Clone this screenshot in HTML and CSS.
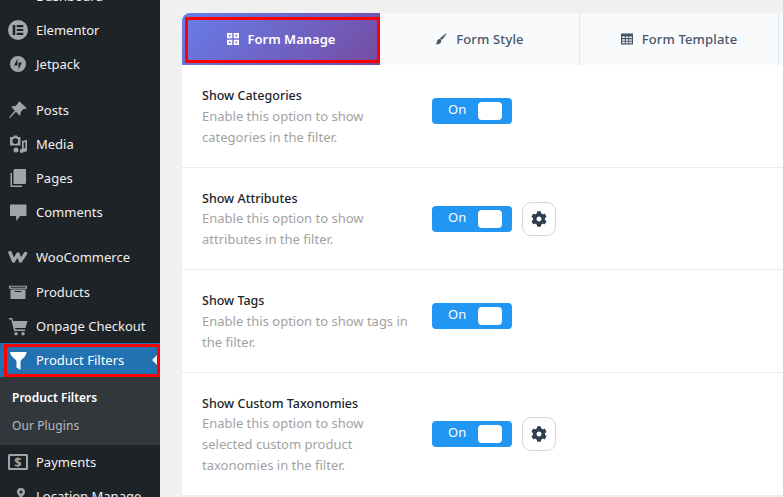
FILE: index.html
```html
<!DOCTYPE html>
<html lang="en">
<head>
<meta charset="utf-8">
<title>Product Filters</title>
<link rel="stylesheet" href="styles.css">
</head>
<body>
<div class="page">
  <aside class="sidebar">
    <nav class="menu">
      <a class="item"><svg class="ic" viewBox="0 0 20 20"><path d="M3 14a8 8 0 1 1 14 0z"/></svg><span>Dashboard</span></a>
      <a class="item"><svg class="ic ic-lg" viewBox="0 0 20 20"><path fill-rule="evenodd" d="M10 0a10 10 0 1 0 0 20 10 10 0 0 0 0-20zM4.700 5h2.600v10H4.700zM8.700 5h6.600v2.200H8.700zM8.700 8.900h6.600v2.200H8.700zM8.700 12.800h6.600V15H8.700z"/></svg><span>Elementor</span></a>
      <a class="item"><svg class="ic" viewBox="0 0 20 20"><path fill-rule="evenodd" d="M10 2a8 8 0 1 0 0 16 8 8 0 0 0 0-16zM9.500 4.500v7H6zM10.500 15.500v-7H14z"/></svg><span>Jetpack</span></a>
      <div class="sep"></div>
      <a class="item"><svg class="ic" viewBox="0 0 20 20"><path d="M11.500 1.500l7 6.500-1.300 1.200-1.400-.5-3.300 3.300c.4 1.500.1 2.700-.8 3.800L8 11.800 2 18l-.9-.7 5.700-6.600L3.300 7c1.200-1 2.500-1.300 3.900-.8l3.200-3.300-.3-.9z"/></svg><span>Posts</span></a>
      <a class="item"><svg class="ic" viewBox="0 0 20 20"><path fill-rule="evenodd" d="M2 3h3l1-1.500h3l1 1.500h2.500v8.500H2zM7.300 4.300a2.800 2.800 0 1 0 0 5.600 2.800 2.800 0 0 0 0-5.600z"/><path d="M14 7l5-1.200V16a2 2 0 1 1-1.700-1.900V8.200l-1.600.4V17a2 2 0 1 1-1.700-1.900zM8 13.500a2.500 2.500 0 1 1 0 5 2.500 2.500 0 0 1 0-5z"/></svg><span>Media</span></a>
      <a class="item"><svg class="ic" viewBox="0 0 20 20"><path d="M7 1h11v13.500a1.500 1.500 0 0 1-1.500 1.500H5.500V2.500A1.500 1.500 0 0 1 7 1z"/><path d="M2.500 5H4v12.500h10V19H2.500z"/></svg><span>Pages</span></a>
      <a class="item"><svg class="ic" viewBox="0 0 20 20"><path d="M3 2.500h14.500a1 1 0 0 1 1 1V13a1 1 0 0 1-1 1H12l-3.500 5-.5-5H3a1 1 0 0 1-1-1V3.500a1 1 0 0 1 1-1z"/></svg><span>Comments</span></a>
      <div class="sep sep-sm"></div>
      <a class="item item-woo"><svg class="ic ic-woo" viewBox="0 0 20 12"><path d="M2 1.500L5.500 10 10 3l2.500 7L17.500 2.500" /></svg><span>WooCommerce</span></a>
      <a class="item"><svg class="ic" viewBox="0 0 20 20"><path fill-rule="evenodd" d="M1 3.700h18v3H1zM2.300 4.700v1h15.400v-1zM2.500 7.500h15V17h-15zM6.500 9v1h7V9z"/></svg><span>Products</span></a>
      <a class="item"><svg class="ic" viewBox="0 0 20 20"><path d="M1 2h3.200l.8 3H19.500l-2 7H7l.5 1.500H17V15H6L3.200 3.500H1zM8 16a1.700 1.700 0 1 1 0 3.400A1.700 1.700 0 0 1 8 16zM15 16a1.700 1.700 0 1 1 0 3.400 1.700 1.700 0 0 1 0-3.400z"/></svg><span>Onpage Checkout</span></a>
      <a class="item item-current"><svg class="ic" viewBox="0 0 20 20"><path d="M2 2h16.500c0 2-1 4-3 6-2 1.500-3 2.500-3 4v8l-4-2.500V12c0-1.500-1-2.500-3-4C3.500 6 2 4 2 2z"/></svg><span>Product Filters</span><i class="pointer"></i></a>
      <div class="submenu">
        <a class="sub sub-on">Product Filters</a>
        <a class="sub">Our Plugins</a>
      </div>
      <a class="item"><svg class="ic ic-pay" viewBox="0 0 20 16"><path fill-rule="evenodd" d="M1.500 0h17A1.500 1.500 0 0 1 20 1.500v13a1.500 1.500 0 0 1-1.500 1.500h-17A1.500 1.500 0 0 1 0 14.500v-13A1.500 1.500 0 0 1 1.500 0zM2 2v12h16V2z"/><text x="10" y="12.500" class="dollar">$</text></svg><span>Payments</span></a>
      <a class="item"><svg class="ic" viewBox="0 0 20 20"><path fill-rule="evenodd" d="M13 2a4 4 0 0 1 4 4c0 2-2 4-4 6-2-2-4-4-4-6a4 4 0 0 1 4-4zM13 4.500a1.500 1.500 0 1 0 0 3 1.500 1.500 0 0 0 0-3z"/><path d="M1 16c3-4 6-5 8-5l4 3 3-3 3 1v8H1z"/></svg><span>Location Manage</span></a>
    </nav>
  </aside>
  <main class="main">
    <div class="panel">
      <div class="tabs">
        <div class="tab tab-on">
          <svg class="tab-ic" viewBox="0 0 12 12"><path fill-rule="evenodd" d="M0 0h5.300v5.300H0zM1.800 1.800v1.700h1.700V1.800zM6.700 0H12v5.300H6.700zM8.500 1.800v1.700h1.700V1.800zM0 6.700h5.300V12H0zM1.800 8.500v1.700h1.700V8.500zM6.700 6.700H12V12H6.700zM8.500 8.500v1.700h1.700V8.500z"/></svg>
          <span>Form Manage</span>
        </div>
        <div class="tab">
          <svg class="tab-ic" viewBox="0 0 12 12"><path d="M11.800.2c.3.300-3.500 5.300-5.200 6.800L5 5.400C6.500 3.700 11.500-.1 11.800.2zM4.400 6c1 0 1.900.8 1.900 1.900C6.300 10 4 11.500.3 11.300c1.300-.7 1.500-1.400 1.700-2.800C2.200 7 3.200 6 4.400 6z"/></svg>
          <span>Form Style</span>
        </div>
        <div class="tab">
          <svg class="tab-ic" viewBox="0 0 12 12"><path fill-rule="evenodd" d="M0 .5h12v11H0zM1.200 3.500v1.600h2.600V3.500zM4.800 3.500v1.600h2.400V3.500zM8.200 3.500v1.600h2.600V3.500zM1.200 6.200v1.600h2.600V6.200zM4.800 6.200v1.600h2.400V6.200zM8.200 6.200v1.600h2.600V6.200zM1.200 8.800v1.500h2.600V8.800zM4.800 8.800v1.500h2.400V8.800zM8.200 8.800v1.500h2.600V8.800z"/></svg>
          <span>Form Template</span>
        </div>
        <div class="tab tab-rest"></div>
      </div>
      <section class="row">
        <div class="info"><h3>Show Categories</h3><p>Enable this option to show categories in the filter.</p></div>
        <div class="controls controls-plain"><div class="toggle"><span>On</span><i></i></div></div>
      </section>
      <section class="row">
        <div class="info"><h3>Show Attributes</h3><p>Enable this option to show attributes in the filter.</p></div>
        <div class="controls"><div class="toggle"><span>On</span><i></i></div>
          <button class="gear"><svg viewBox="0 0 512 512"><path d="M487.400 315.700l-42.600-24.600c4.300-23.200 4.300-47 0-70.200l42.600-24.600c4.900-2.800 7.100-8.600 5.500-14-11.100-35.600-30-67.800-54.700-94.600-3.800-4.100-10-5.100-14.800-2.300L380.800 110c-17.900-15.400-38.500-27.300-60.800-35.100V25.800c0-5.600-3.900-10.500-9.400-11.700-36.700-8.200-74.300-7.800-109.200 0-5.500 1.200-9.400 6.100-9.400 11.700V75c-22.200 7.900-42.800 19.800-60.800 35.100L88.700 85.500c-4.900-2.800-11-1.900-14.800 2.300-24.700 26.700-43.600 58.900-54.700 94.600-1.700 5.400.6 11.200 5.500 14L67.300 221c-4.300 23.200-4.300 47 0 70.200l-42.600 24.600c-4.900 2.800-7.100 8.600-5.500 14 11.100 35.600 30 67.800 54.700 94.600 3.800 4.100 10 5.100 14.800 2.300l42.600-24.600c17.900 15.400 38.500 27.300 60.800 35.100v49.200c0 5.600 3.900 10.500 9.400 11.700 36.700 8.200 74.300 7.800 109.200 0 5.500-1.200 9.400-6.100 9.400-11.700v-49.200c22.200-7.900 42.800-19.800 60.800-35.100l42.600 24.600c4.900 2.800 11 1.900 14.800-2.300 24.700-26.700 43.600-58.900 54.700-94.600 1.500-5.500-.7-11.300-5.600-14.100zM256 336c-44.100 0-80-35.900-80-80s35.900-80 80-80 80 35.900 80 80-35.900 80-80 80z"/></svg></button></div>
      </section>
      <section class="row">
        <div class="info"><h3>Show Tags</h3><p>Enable this option to show tags in the filter.</p></div>
        <div class="controls controls-plain"><div class="toggle"><span>On</span><i></i></div></div>
      </section>
      <section class="row row-last">
        <div class="info"><h3>Show Custom Taxonomies</h3><p>Enable this option to show selected custom product taxonomies in the filter.</p></div>
        <div class="controls"><div class="toggle"><span>On</span><i></i></div>
          <button class="gear"><svg viewBox="0 0 512 512"><path d="M487.400 315.700l-42.600-24.600c4.300-23.200 4.300-47 0-70.200l42.600-24.600c4.900-2.800 7.100-8.600 5.500-14-11.100-35.600-30-67.800-54.700-94.600-3.800-4.100-10-5.100-14.800-2.300L380.800 110c-17.900-15.400-38.500-27.300-60.800-35.100V25.800c0-5.600-3.900-10.500-9.400-11.700-36.700-8.200-74.300-7.800-109.200 0-5.500 1.200-9.400 6.100-9.400 11.700V75c-22.200 7.900-42.800 19.800-60.800 35.100L88.700 85.500c-4.900-2.800-11-1.900-14.800 2.300-24.700 26.700-43.600 58.900-54.700 94.600-1.700 5.400.6 11.200 5.500 14L67.300 221c-4.300 23.200-4.300 47 0 70.200l-42.600 24.600c-4.900 2.800-7.100 8.600-5.500 14 11.100 35.600 30 67.800 54.700 94.600 3.800 4.100 10 5.100 14.800 2.300l42.600-24.600c17.900 15.400 38.500 27.300 60.800 35.100v49.200c0 5.600 3.900 10.500 9.400 11.700 36.700 8.200 74.300 7.800 109.200 0 5.500-1.200 9.400-6.100 9.400-11.700v-49.200c22.200-7.900 42.800-19.800 60.800-35.100l42.600 24.600c4.900 2.800 11 1.900 14.800-2.300 24.700-26.700 43.600-58.900 54.700-94.600 1.500-5.500-.7-11.300-5.600-14.100zM256 336c-44.100 0-80-35.900-80-80s35.900-80 80-80 80 35.900 80 80-35.900 80-80 80z"/></svg></button></div>
      </section>
    </div>
  </main>
</div>
</body>
</html>
```
FILE: styles.css
```css
* { box-sizing: border-box; }
html, body { margin: 0; height: 100%; overflow: hidden; }
body { background: #f0f0f1; font-family: "Noto Sans", "Open Sans", sans-serif; }
.page { display: flex; height: 497px; overflow: hidden; }

.sidebar { width: 160px; flex: none; background: #1d2327; height: 497px; overflow: hidden; }
.menu { margin-top: -21px; display: flex; flex-direction: column; }
.item { position: relative; display: flex; align-items: center; height: 34px; flex: none; color: #f0f0f1; font-size: 13px; }
.item .ic { width: 20px; height: 20px; margin-left: 8px; margin-right: 8px; fill: #a0a5aa; flex: none; }
.item .ic-lg { fill: #a7aaad; }
.item .ic-pay { height: 16px; }
.item .ic-woo { height: 12px; fill: none; stroke: #a0a5aa; stroke-width: 3.400; stroke-linejoin: round; stroke-linecap: round; }
.item-woo { height: 35px; padding-bottom: 1px; }
.dollar { font: 700 13px "Noto Sans", sans-serif; text-anchor: middle; fill: #a0a5aa; }
.sep { height: 12px; flex: none; }
.sep-sm { height: 11px; }
.item-current { background: #2271b1; color: #fff; }
.item-current .ic { fill: #fff; }
.item-current::after { content: ""; position: absolute; inset: 1px 0 0 4px; border: 3px solid #f00; z-index: 2; }
.pointer { position: absolute; right: 0; top: 9px; border: 8px solid transparent; border-right-color: #f0f0f1; border-left: 0; z-index: 1; }
.submenu { background: #32373c; height: 68px; padding-top: 6px; flex: none; }
.sub { display: flex; align-items: center; height: 28px; padding-left: 12px; font-size: 12px; color: rgba(240,246,252,.7); letter-spacing: 0.1px; }
.sub-on { color: #fff; font-weight: 600; letter-spacing: 0; }

.main { flex: 1; min-width: 0; padding: 13px 0 0 22px; overflow: hidden; }
.panel { background: #fff; width: 640px; }
.tabs { display: flex; height: 52px; background: #f8fafc; }
.tab { width: 199px; flex: none; display: flex; align-items: center; justify-content: center; gap: 9px; border-right: 1px solid #e2e8f0; color: #475569; font-size: 13px; font-weight: 500; letter-spacing: 0.15px; }
.tab:nth-child(2) { width: 200px; }
.tab-ic { width: 12px; height: 12px; fill: #475569; flex: none; }
.tab-on { position: relative; width: 198px; color: #fff; font-weight: 600; letter-spacing: 0; border: 0; border-top-left-radius: 8px; background: linear-gradient(135deg, #667eea, #764ba2); }
.tab-on .tab-ic { fill: #fff; }
.tab-on::after { content: ""; position: absolute; inset: 4px 0 2px 3px; border: 3px solid #f00; }
.tab-rest { flex: 1; width: auto; border: 0; }

.row { display: flex; align-items: center; padding: 20px 20px; border-bottom: 1px solid #ececec; }
.info { width: 230px; flex: none; padding-top: 1px; margin-bottom: -1px; }
.info h3 { margin: 0; font-size: 12.500px; line-height: 19.700px; font-weight: 500; color: #1d2327; }
.info p { margin: 0; width: 214px; font-size: 13px; line-height: 21px; color: #a2a2a2; }
.row-last .info h3 { line-height: 19px; }
.controls { display: flex; align-items: center; gap: 10px; }
.controls-plain { margin-bottom: 10px; }
.toggle { position: relative; width: 80px; height: 26px; border-radius: 4px; background: #2196f3; color: #fff; font-size: 13px; }
.toggle span { position: absolute; left: 16px; top: 3px; line-height: 17px; }
.toggle i { position: absolute; right: 10px; top: 4px; width: 24px; height: 18px; border-radius: 4px; background: #fff; }
.gear { width: 34px; height: 34px; padding: 0; border: 1px solid #cfd8e6; border-radius: 9px; background: #fff; display: flex; align-items: center; justify-content: center; }
.gear svg { width: 16px; height: 16px; fill: #2c3e50; }
```
